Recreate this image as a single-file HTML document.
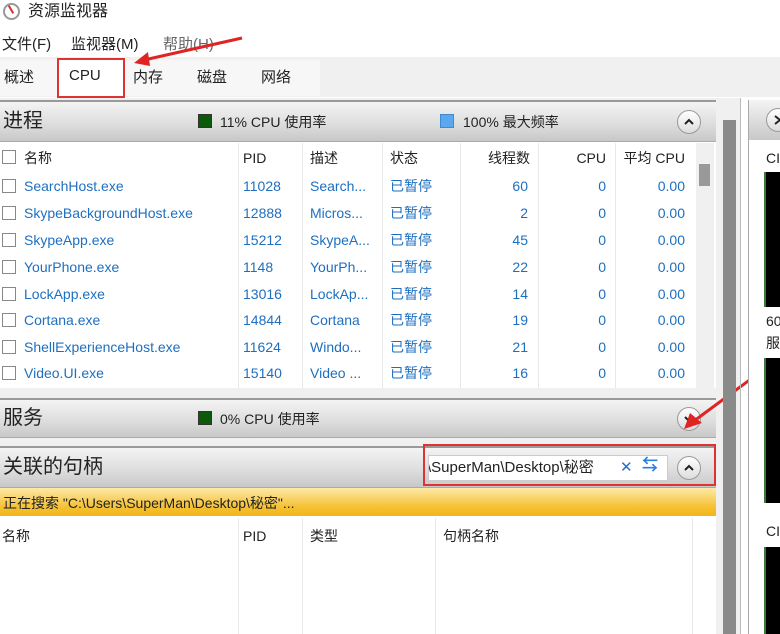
<!DOCTYPE html><html><head><meta charset="utf-8"><style>
*{margin:0;padding:0;box-sizing:border-box}
body{width:780px;height:634px;overflow:hidden;background:#fff;font-family:"Liberation Sans","Noto Sans CJK SC",sans-serif;color:#222;position:relative}
.a{position:absolute;white-space:nowrap;line-height:18px}
.hdr{position:absolute;left:0;width:716px;background:linear-gradient(#f4f4f4,#dcdcdc 60%,#c8c8c8);border-top:2px solid #9a9a9a;border-bottom:1px solid #aaa}
.hdr .t{position:absolute;left:3px;font-size:20px;line-height:24px;color:#222}
.btn{position:absolute;width:24px;height:24px;border-radius:50%;background:linear-gradient(#fff,#ddd);border:1px solid #999}
.btn svg{position:absolute;left:5px;top:5px}
.row{position:absolute;left:0;width:696px;height:27px;font-size:14px;color:#1e6fc0}
.row span{position:absolute;top:4px;line-height:18px}
.cb{position:absolute;left:2px;top:6px;width:14px;height:14px;border:1px solid #888;background:#fff}
.sep{position:absolute;top:143px;width:1px;height:245px;background:#e8e8e8}
.r{text-align:right}
</style></head><body>
<div class="a" style="left:3px;top:3px;width:17px;height:17px;border-radius:50%;border:2px solid #999;background:#fff"></div>
<div class="a" style="left:10px;top:5px;width:2px;height:9px;background:#c33;transform:rotate(-30deg)"></div>
<div class="a" style="left:28px;top:3px;font-size:16px">资源监视器</div>
<div class="a" style="left:2px;top:36px;font-size:15px">文件(F)</div>
<div class="a" style="left:71px;top:36px;font-size:15px">监视器(M)</div>
<div class="a" style="left:163px;top:36px;font-size:15px;color:#666">帮助(H)</div>
<div class="a" style="left:0;top:57px;width:780px;height:40px;background:#f0f0f0"></div>
<div class="a" style="left:0;top:60px;width:320px;height:36px;background:#f7f7f7"></div>
<div class="a" style="left:57px;top:58px;width:68px;height:40px;background:#fff;border:2px solid #d33"></div>
<div class="a" style="left:4px;top:69px;font-size:15px">概述</div>
<div class="a" style="left:69px;top:67px;font-size:15px">CPU</div>
<div class="a" style="left:133px;top:69px;font-size:15px">内存</div>
<div class="a" style="left:197px;top:69px;font-size:15px">磁盘</div>
<div class="a" style="left:261px;top:69px;font-size:15px">网络</div>
<svg class="a" style="left:130px;top:30px" width="115" height="40"><line x1="112" y1="8" x2="14" y2="30" stroke="#e02424" stroke-width="3"/><polygon points="4,33 18,22 20,36" fill="#e02424"/></svg>
<div class="a" style="left:0;top:98px;width:740px;height:536px;background:#f0f0f0"></div>
<div class="a" style="left:0;top:100px;width:716px;height:534px;background:#fff"></div>
<div class="hdr" style="top:100px;height:42px"><div class="t" style="top:7px">进程</div>
<div class="a" style="left:198px;top:12px;width:14px;height:14px;background:#0a5a0a;border:1px solid #333"></div>
<div class="a" style="left:220px;top:11px;font-size:14px">11% CPU 使用率</div>
<div class="a" style="left:440px;top:12px;width:14px;height:14px;background:#5aa8f0;border:1px solid #48c"></div>
<div class="a" style="left:463px;top:11px;font-size:14px">100% 最大频率</div>
<div class="btn" style="left:677px;top:8px"><svg width="12" height="12"><path d="M2 8 L6 4 L10 8" fill="none" stroke="#222" stroke-width="2"/></svg></div></div>
<div class="cb" style="top:150px"></div>
<div class="a" style="left:24px;top:149px;font-size:14px">名称</div>
<div class="a" style="left:243px;top:149px;font-size:14px">PID</div>
<div class="a" style="left:310px;top:149px;font-size:14px">描述</div>
<div class="a" style="left:390px;top:149px;font-size:14px">状态</div>
<div class="a r" style="left:470px;width:60px;top:149px;font-size:14px">线程数</div>
<div class="a r" style="left:560px;width:46px;top:149px;font-size:14px">CPU</div>
<div class="a r" style="left:615px;width:70px;top:149px;font-size:14px">平均 CPU</div>
<div class="sep" style="left:238px"></div><div class="sep" style="left:302px"></div><div class="sep" style="left:382px"></div><div class="sep" style="left:460px"></div><div class="sep" style="left:538px"></div><div class="sep" style="left:615px"></div>
<div class="a" style="left:696px;top:143px;width:18px;height:245px;background:#f0f0f0"></div>
<div class="a" style="left:699px;top:164px;width:11px;height:22px;background:#999"></div>
<div class="row" style="top:173px"><div class="cb"></div><span style="left:24px">SearchHost.exe</span><span style="left:243px">11028</span><span style="left:310px">Search...</span><span style="left:390px">已暂停</span><span class="r" style="left:470px;width:58px">60</span><span class="r" style="left:560px;width:46px">0</span><span class="r" style="left:615px;width:70px">0.00</span></div>
<div class="row" style="top:200px"><div class="cb"></div><span style="left:24px">SkypeBackgroundHost.exe</span><span style="left:243px">12888</span><span style="left:310px">Micros...</span><span style="left:390px">已暂停</span><span class="r" style="left:470px;width:58px">2</span><span class="r" style="left:560px;width:46px">0</span><span class="r" style="left:615px;width:70px">0.00</span></div>
<div class="row" style="top:227px"><div class="cb"></div><span style="left:24px">SkypeApp.exe</span><span style="left:243px">15212</span><span style="left:310px">SkypeA...</span><span style="left:390px">已暂停</span><span class="r" style="left:470px;width:58px">45</span><span class="r" style="left:560px;width:46px">0</span><span class="r" style="left:615px;width:70px">0.00</span></div>
<div class="row" style="top:254px"><div class="cb"></div><span style="left:24px">YourPhone.exe</span><span style="left:243px">1148</span><span style="left:310px">YourPh...</span><span style="left:390px">已暂停</span><span class="r" style="left:470px;width:58px">22</span><span class="r" style="left:560px;width:46px">0</span><span class="r" style="left:615px;width:70px">0.00</span></div>
<div class="row" style="top:281px"><div class="cb"></div><span style="left:24px">LockApp.exe</span><span style="left:243px">13016</span><span style="left:310px">LockAp...</span><span style="left:390px">已暂停</span><span class="r" style="left:470px;width:58px">14</span><span class="r" style="left:560px;width:46px">0</span><span class="r" style="left:615px;width:70px">0.00</span></div>
<div class="row" style="top:307px"><div class="cb"></div><span style="left:24px">Cortana.exe</span><span style="left:243px">14844</span><span style="left:310px">Cortana</span><span style="left:390px">已暂停</span><span class="r" style="left:470px;width:58px">19</span><span class="r" style="left:560px;width:46px">0</span><span class="r" style="left:615px;width:70px">0.00</span></div>
<div class="row" style="top:334px"><div class="cb"></div><span style="left:24px">ShellExperienceHost.exe</span><span style="left:243px">11624</span><span style="left:310px">Windo...</span><span style="left:390px">已暂停</span><span class="r" style="left:470px;width:58px">21</span><span class="r" style="left:560px;width:46px">0</span><span class="r" style="left:615px;width:70px">0.00</span></div>
<div class="row" style="top:360px"><div class="cb"></div><span style="left:24px">Video.UI.exe</span><span style="left:243px">15140</span><span style="left:310px">Video ...</span><span style="left:390px">已暂停</span><span class="r" style="left:470px;width:58px">16</span><span class="r" style="left:560px;width:46px">0</span><span class="r" style="left:615px;width:70px">0.00</span></div>
<div class="a" style="left:0;top:388px;width:716px;height:10px;background:#f0f0f0"></div>
<div class="hdr" style="top:398px;height:40px"><div class="t" style="top:6px">服务</div>
<div class="a" style="left:198px;top:11px;width:14px;height:14px;background:#0a5a0a;border:1px solid #333"></div>
<div class="a" style="left:220px;top:10px;font-size:14px">0% CPU 使用率</div>
<div class="btn" style="left:677px;top:7px"><svg width="12" height="12"><path d="M2 4 L6 8 L10 4" fill="none" stroke="#222" stroke-width="2"/></svg></div></div>
<div class="a" style="left:0;top:438px;width:716px;height:8px;background:#f0f0f0"></div>
<div class="hdr" style="top:446px;height:42px"><div class="t" style="top:7px">关联的句柄</div>
<div class="a" style="left:428px;top:7px;width:240px;height:26px;background:#fff;border:1px solid #ccc;overflow:hidden">
<div class="a" style="left:-2px;top:3px;font-size:15px">\SuperMan\Desktop\秘密</div></div>
<div class="a" style="left:618px;top:11px;font-size:15px;color:#2a6fc0;background:#fff;padding-left:2px">✕</div>
<div class="a" style="left:642px;top:9px;font-size:16px;color:#2a7fe0;font-weight:bold">⇆</div>
<div class="btn" style="left:677px;top:8px"><svg width="12" height="12"><path d="M2 8 L6 4 L10 8" fill="none" stroke="#222" stroke-width="2"/></svg></div></div>
<div class="a" style="left:423px;top:444px;width:293px;height:42px;border:2px solid #d33"></div>
<svg class="a" style="left:680px;top:355px" width="100" height="80"><line x1="98" y1="4" x2="14" y2="66" stroke="#e02424" stroke-width="3"/><polygon points="4,74 10,58 22,68" fill="#e02424"/></svg>
<div class="a" style="left:0;top:488px;width:716px;height:28px;background:linear-gradient(#fde9a8,#f5c030 70%,#f2b51a)"></div>
<div class="a" style="left:3px;top:494px;font-size:14px">正在搜索 "C:\Users\SuperMan\Desktop\秘密"...</div>
<div class="a" style="left:2px;top:527px;font-size:14px">名称</div>
<div class="a" style="left:243px;top:527px;font-size:14px">PID</div>
<div class="a" style="left:310px;top:527px;font-size:14px">类型</div>
<div class="a" style="left:443px;top:527px;font-size:14px">句柄名称</div>
<div class="a" style="left:238px;top:518px;width:1px;height:116px;background:#e8e8e8"></div>
<div class="a" style="left:302px;top:518px;width:1px;height:116px;background:#e8e8e8"></div>
<div class="a" style="left:435px;top:518px;width:1px;height:116px;background:#e8e8e8"></div>
<div class="a" style="left:692px;top:518px;width:1px;height:116px;background:#e8e8e8"></div>
<div class="a" style="left:723px;top:120px;width:13px;height:514px;background:#8a8a8a"></div>
<div class="a" style="left:740px;top:98px;width:1px;height:536px;background:#bbb"></div>
<div class="a" style="left:748px;top:100px;width:32px;height:534px;background:#fff;border-left:1px solid #aaa"></div>
<div class="a" style="left:749px;top:100px;width:31px;height:40px;background:linear-gradient(#f4f4f4,#c8c8c8)"></div>
<div class="btn" style="left:766px;top:108px"><svg width="12" height="12"><path d="M3 2 L8 6 L3 10" fill="none" stroke="#222" stroke-width="2"/></svg></div>
<div class="a" style="left:766px;top:149px;font-size:14px">CI</div>
<div class="a" style="left:764px;top:172px;width:16px;height:135px;background:#000;border-left:2px solid #3a7a3a"></div>
<div class="a" style="left:766px;top:312px;font-size:14px">60</div>
<div class="a" style="left:766px;top:334px;font-size:14px">服</div>
<div class="a" style="left:764px;top:358px;width:16px;height:145px;background:#000;border-left:2px solid #3a7a3a"></div>
<div class="a" style="left:766px;top:522px;font-size:14px">CI</div>
<div class="a" style="left:764px;top:547px;width:16px;height:87px;background:#000;border-left:2px solid #3a7a3a"></div>
</body></html>
